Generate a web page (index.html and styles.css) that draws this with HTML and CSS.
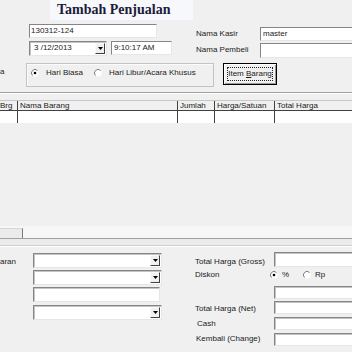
FILE: index.html
```html
<!DOCTYPE html>
<html>
<head>
<meta charset="utf-8">
<link rel="stylesheet" href="styles.css">
</head>
<body>
<div class="win">
  <div class="title-row"><div class="title">Tambah Penjualan</div></div>

  <div class="top">
    <div class="top-left">
      <div class="field f-nota">130312-124</div>
      <div class="date-row">
        <div class="field combo f-date"><span class="ctext">3 /12/2013</span><span class="drop"><svg viewBox="0 0 5 3" width="5" height="3"><polygon points="0,0 5,0 2.5,3" fill="#000"/></svg></span></div>
        <div class="field f-time">9:10:17 AM</div>
      </div>
    </div>
    <div class="top-right">
      <div class="lrow"><span class="lbl">Nama Kasir</span><div class="field f-wide">master</div></div>
      <div class="lrow"><span class="lbl">Nama Pembeli</span><div class="field f-wide f-tall"></div></div>
    </div>
  </div>

  <div class="mid">
    <div class="cut">a</div>
    <div class="group">
      <div class="radio r1"><svg viewBox="0 0 8 8"><circle cx="4" cy="4" r="3.5" fill="#fff"/><path d="M6.5 1.5 A3.5 3.5 0 0 0 1.5 6.5" fill="none" stroke="#808080"/><circle cx="4" cy="4" r="1.3" fill="#000"/></svg><span>Hari Biasa</span></div>
      <div class="radio"><svg viewBox="0 0 8 8"><circle cx="4" cy="4" r="3.5" fill="#fff"/><path d="M6.5 1.5 A3.5 3.5 0 0 0 1.5 6.5" fill="none" stroke="#808080"/></svg><span>Hari Libur/Acara Khusus</span></div>
    </div>
    <div class="btn"><span class="focus">Item&nbsp;<u>B</u>arang</span></div>
  </div>

  <div class="grid">
    <div class="ghead">
      <div class="c c1">Brg</div>
      <div class="c c2">Nama Barang</div>
      <div class="c c3">Jumlah</div>
      <div class="c c4">Harga/Satuan</div>
      <div class="c c5">Total Harga</div>
    </div>
    <div class="grow">
      <div class="c c1"></div>
      <div class="c c2"></div>
      <div class="c c3"></div>
      <div class="c c4"></div>
      <div class="c c5"></div>
    </div>
    <div class="gspace"></div>
    <div class="hscroll"><div class="thumb"></div></div>
    <div class="hband"></div>
  </div>

  <div class="bottom">
    <div class="b-left">
      <div class="b-row">
        <div class="b-lbl">aran</div>
        <div class="field combo cb"><span class="ctext"></span><span class="drop"><svg viewBox="0 0 5 3" width="5" height="3"><polygon points="0,0 5,0 2.5,3" fill="#000"/></svg></span></div>
      </div>
      <div class="b-row">
        <div class="b-lbl"></div>
        <div class="field combo cb"><span class="ctext"></span><span class="drop"><svg viewBox="0 0 5 3" width="5" height="3"><polygon points="0,0 5,0 2.5,3" fill="#000"/></svg></span></div>
      </div>
      <div class="b-row">
        <div class="b-lbl"></div>
        <div class="field combo tb"></div>
      </div>
      <div class="b-row b-last">
        <div class="b-lbl"></div>
        <div class="field combo cb"><span class="ctext"></span><span class="drop"><svg viewBox="0 0 5 3" width="5" height="3"><polygon points="0,0 5,0 2.5,3" fill="#000"/></svg></span></div>
      </div>
    </div>

    <div class="b-right">
      <div class="r r-gross"><span class="lbl">Total Harga (Gross)</span><div class="field combo box"></div></div>
      <div class="r r-disc"><span class="lbl">Diskon</span>
        <div class="radios">
          <div class="radio rp1"><svg viewBox="0 0 8 8"><circle cx="4" cy="4" r="3.5" fill="#fff"/><path d="M6.5 1.5 A3.5 3.5 0 0 0 1.5 6.5" fill="none" stroke="#808080"/><circle cx="4" cy="4" r="1.3" fill="#000"/></svg><span>%</span></div>
          <div class="radio"><svg viewBox="0 0 8 8"><circle cx="4" cy="4" r="3.5" fill="#fff"/><path d="M6.5 1.5 A3.5 3.5 0 0 0 1.5 6.5" fill="none" stroke="#808080"/></svg><span>Rp</span></div>
        </div>
      </div>
      <div class="r r-b2"><span class="lbl"></span><div class="field combo box sm"></div></div>
      <div class="r r-net"><span class="lbl">Total Harga (Net)</span><div class="field combo box sm"></div></div>
      <div class="r r-cash"><span class="lbl">Cash</span><div class="field combo box sm"></div></div>
      <div class="r r-kem"><span class="lbl">Kembali (Change)</span><div class="field combo box sm"></div></div>
    </div>
  </div>
</div>
</body>
</html>
```

FILE: styles.css
```css
* { box-sizing: border-box; }
html, body { margin: 0; padding: 0; }
body {
  width: 352px;
  height: 352px;
  overflow: hidden;
  background: #f0f0f0;
  font-family: "Liberation Sans", Arial, sans-serif;
  font-size: 8px;
  color: #1a1a1a;
}
.win { width: 352px; height: 352px; overflow: hidden; }

/* title */
.title-row { height: 20px; display: flex; }
.title {
  margin-left: 50px;
  width: 143px;
  height: 20px;
  padding-left: 7px;
  background: #f6f8fb;
  font-family: "Liberation Serif", "Times New Roman", serif;
  font-weight: bold;
  font-size: 14px;
  line-height: 20px;
  color: #1c1c3a;
  white-space: nowrap;
}

/* fields */
.field {
  height: 14px;
  background: #fff;
  border: 1px solid;
  border-color: #858585 #e6e6e6 #e6e6e6 #858585;
  line-height: 12px;
  padding-left: 1px;
  white-space: nowrap;
  overflow: hidden;
  flex: none;
}
.combo { display: flex; box-shadow: inset 1px 1px #c4c4c4; }
.ctext { flex: 1; }
.drop {
  width: 10px;
  height: 11px;
  margin: 1px 1px 0 auto;
  background: #f0f0f0;
  border: 1px solid;
  border-color: #fafafa #404040 #404040 #fafafa;
  display: flex;
  align-items: center;
  justify-content: center;
  flex: none;
}
.drop svg { display: block; }

/* top area */
.top { height: 43px; display: flex; }
.top-left {
  margin-left: 29px;
  width: 143px;
  flex: none;
  padding-top: 4px;
  display: flex;
  flex-direction: column;
  gap: 3px;
}
.f-nota { width: 128px; }
.date-row { display: flex; gap: 4px; }
.f-date { width: 78px; height: 15px; padding-left: 4px; }
.f-time { width: 61px; padding-left: 2px; }
.top-right {
  margin-left: 24px;
  padding-top: 7px;
  width: 200px;
  flex: none;
  display: flex;
  flex-direction: column;
  gap: 2px;
}
.lrow { display: flex; align-items: center; }
.lrow .lbl { width: 64px; flex: none; white-space: nowrap; margin-top: -2px; }
.f-wide { width: 120px; padding-left: 2px; }
.f-tall { height: 15px; }

/* radio row */
.mid { height: 24px; display: flex; align-items: flex-start; }
.cut {
  width: 5px;
  flex: none;
  white-space: nowrap;
  padding-top: 4px;
  line-height: 10px;
}
.group {
  margin-left: 21px;
  width: 188px;
  height: 24px;
  flex: none;
  border: 1px solid #c3c3c3;
  box-shadow: inset 1px 1px #fbfbfb;
  display: flex;
  padding: 4px 0 0 4px;
}
.radio {
  display: flex;
  align-items: center;
  height: 10px;
  line-height: 10px;
  white-space: nowrap;
}
.radio svg { width: 8px; height: 8px; margin-right: 7px; flex: none; display: block; }
.r1 { width: 63px; }
.btn {
  margin-left: 9px;
  width: 54px;
  height: 22px;
  flex: none;
  border: 1px solid #000;
  background: #f0f0f0;
  box-shadow: inset 1px 1px #fff, inset -1px -1px #9a9a9a;
  padding: 3px;
  display: flex;
}
.btn .focus {
  flex: 1;
  border: 1px dotted #222;
  display: flex;
  align-items: center;
  justify-content: center;
  white-space: nowrap;
  line-height: 10px;
}

/* grid */
.grid {
  margin-top: 5px;
  border-top: 1px solid #a0a0a0;
  box-shadow: inset 0 1px #fff;
  padding-top: 7px;
}
.ghead {
  display: flex;
  height: 11px;
  border-top: 1px solid #c8c8c8;
  border-bottom: 1px solid #404040;
}
.grow { display: flex; height: 12px; background: #fff; }
.c {
  border-right: 1px solid #404040;
  padding-left: 2px;
  overflow: hidden;
  white-space: nowrap;
  flex: none;
}
.ghead .c { padding-top: 1px; line-height: 8px; }
.c1 { width: 18px; padding-left: 0; }
.c2 { width: 160px; }
.c3 { width: 37px; }
.c4 { width: 60px; }
.c5 { flex: 1; border-right: none; }
.gspace { height: 103px; }
.hscroll {
  height: 13px;
  background: #f7f7f7;
  border-bottom: 1px solid #a0a0a0;
  display: flex;
  align-items: flex-end;
}
.thumb {
  width: 23px;
  height: 10px;
  background: #ebebeb;
  border-top: 1px solid #d6d6d6;
  border-right: 1px solid #7a7a7a;
}
.hband {
  height: 7px;
  background: #ebebeb;
  border-bottom: 1px solid #cfcfcf;
  box-shadow: 0 1px #fff;
}

/* bottom */
.bottom { display: flex; padding-top: 6px; }
.b-left {
  width: 162px;
  flex: none;
  padding-top: 1px;
  display: flex;
  flex-direction: column;
  gap: 2px;
}
.b-row { display: flex; }
.b-last { margin-top: 1px; }
.b-lbl {
  width: 33px;
  flex: none;
  padding-top: 4px;
  line-height: 10px;
  white-space: nowrap;
}
.cb { width: 129px; height: 15px; }
.cb .drop { height: 11px; margin-top: 1px; }
.tb { width: 127px; height: 15px; }

.b-right {
  margin-left: 33px;
  width: 170px;
  flex: none;
  display: flex;
  flex-direction: column;
}
.r { display: flex; align-items: center; }
.r .lbl { width: 79px; flex: none; white-space: nowrap; line-height: 10px; }
.box { width: 100px; height: 15px; }
.box.sm { height: 13px; }
.r-gross .lbl { padding-top: 4px; }
.r-disc { height: 16px; margin-top: 2px; align-items: flex-start; padding-top: 1px; }
.radios { display: flex; margin-left: -4px; }
.radios .radio svg { margin-right: 4px; }
.rp1 { width: 33px; }
.r-b2 { margin-top: 1px; }
.r-net { margin-top: 2px; }
.r-net .lbl { padding-top: 3px; }
.r-cash { margin-top: 3px; }
.r-cash .lbl { padding-left: 2px; }
.r-kem { margin-top: 3px; }
.r-kem .lbl { padding-left: 1px; padding-bottom: 2px; }
```
